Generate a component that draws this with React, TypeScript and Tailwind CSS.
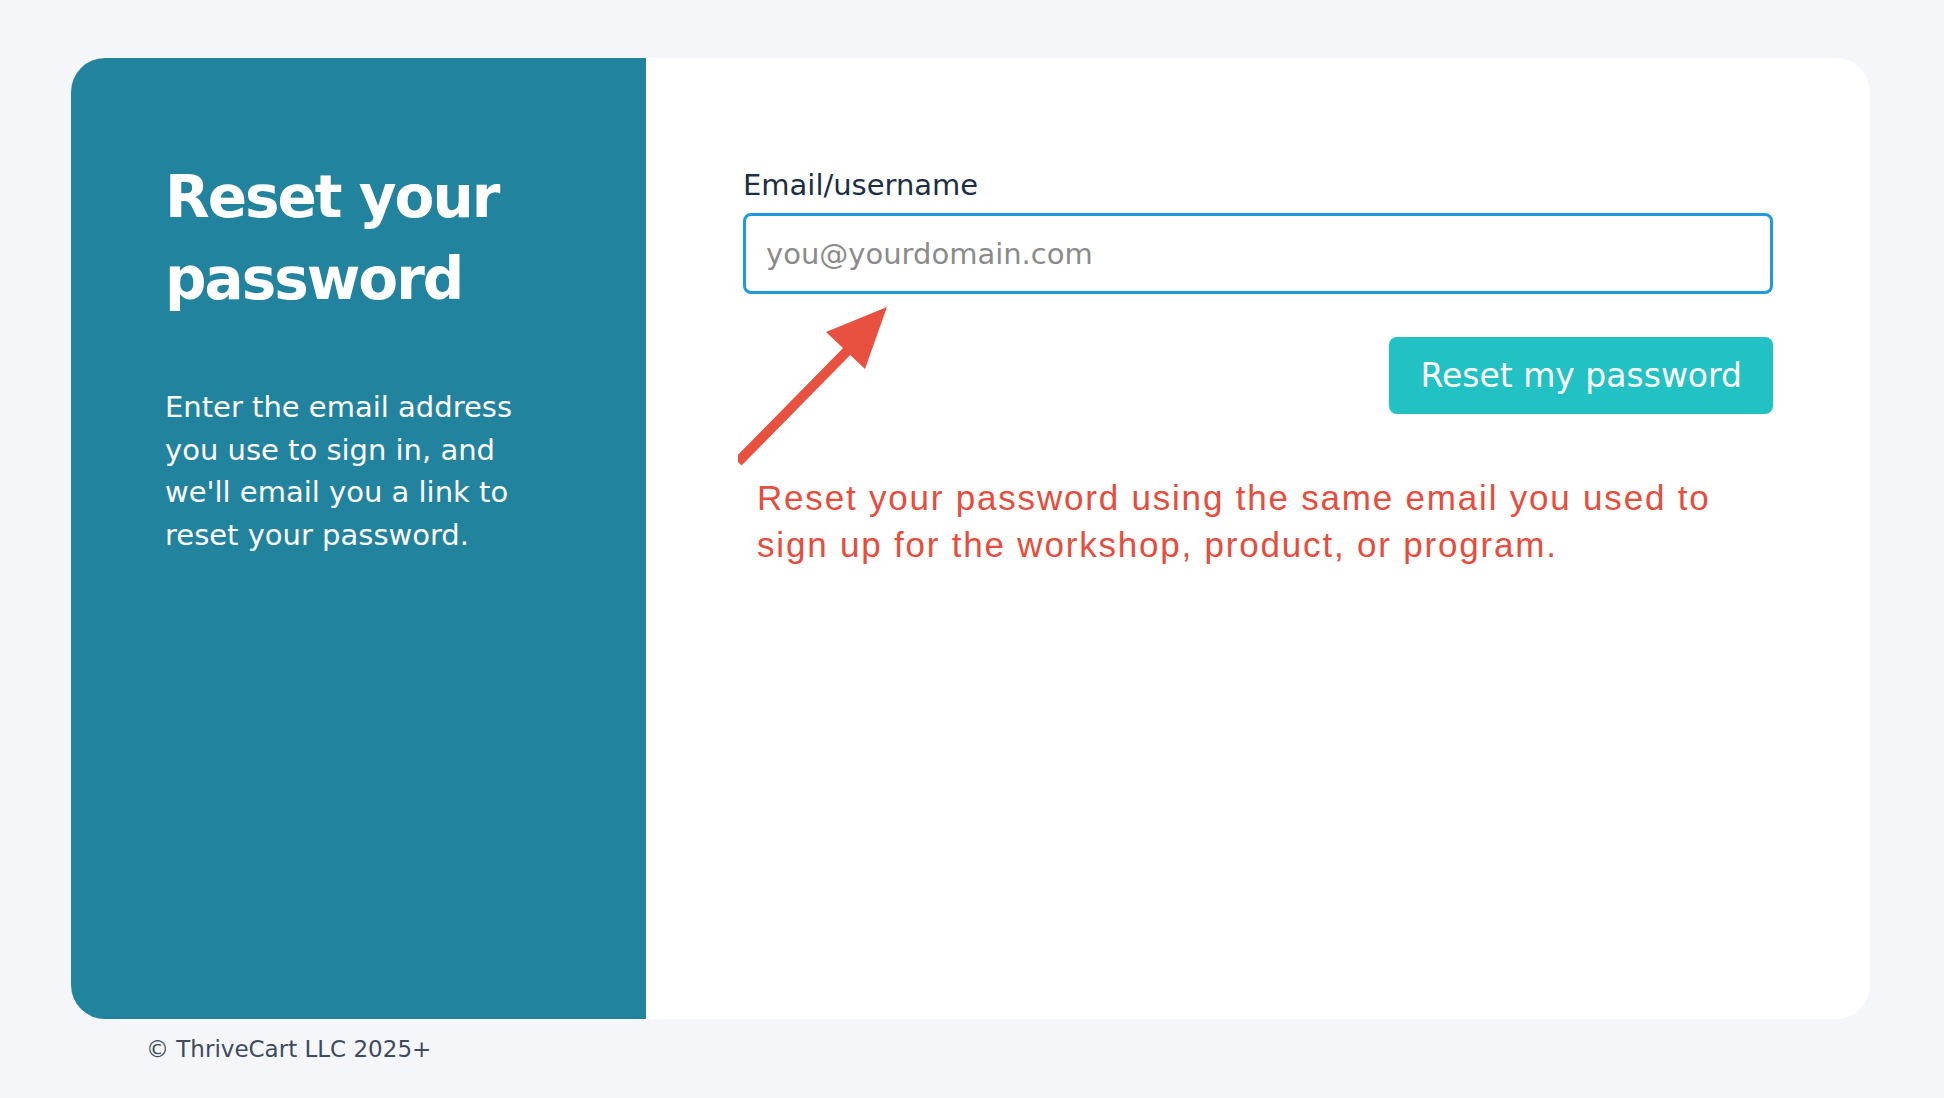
import React from 'react';

const sans = "font-['DejaVu_Sans',sans-serif]";

// red annotation arrow pointing at the email field
const Arrow = () => (
    <svg className="absolute left-0 top-0 pointer-events-none" width="200" height="200" viewBox="0 0 200 200">
        <line x1="0" y1="160" x2="120" y2="38" stroke="#e8503f" strokeWidth="10" />
        <polygon points="149,5 88,30 127,67" fill="#e8503f" />
    </svg>
);

export default function App() {
    return (
        <div className={`min-h-screen bg-[#f4f6fa] pt-[58px] ${sans}`}>
            <div className="ml-[71px] w-[1799px] h-[961px] flex rounded-[34px] overflow-hidden bg-white">
                {/* Left panel */}
                <div className="w-[575px] shrink-0 bg-[#22839f] pl-[94px] pt-[98px] text-white">
                    <h1 className="text-[58px] font-bold leading-[82px] tracking-[-2px]">
                        Reset your<br />password
                    </h1>
                    <p className="mt-[66px] text-[29px] leading-[42.5px]">
                        Enter the email address<br />
                        you use to sign in, and<br />
                        we'll email you a link to<br />
                        reset your password.
                    </p>
                </div>

                {/* Right panel */}
                <div className="relative flex-1 pl-[97px] pr-[97px] pt-[109px]">
                    <label className="block text-[29px] leading-[36px] text-[#1c2e45]">Email/username</label>
                    <input
                        type="text"
                        placeholder="you@yourdomain.com"
                        className="mt-[10px] block w-full h-[81px] rounded-[8px] border-[3px] border-[#2299de] px-[20px] text-[29px] text-[#1c2e45] placeholder:text-[#8b8b8b] outline-none"
                    />
                    <div className="mt-[43px] flex justify-end">
                        <button className="h-[77px] px-[31px] rounded-[8px] bg-[#21c1c4] text-white text-[33px]">
                            Reset my password
                        </button>
                    </div>

                    <div className="relative">
                        <div className="absolute left-[-5px] top-[-112px] w-[200px] h-[200px]">
                            <Arrow />
                        </div>
                    </div>

                    <p className="mt-[60px] ml-[14px] font-['Liberation_Sans',Arial,sans-serif] text-[35px] leading-[47px] tracking-[1.8px] text-[#e74c3c]">
                        Reset your password using the same email you used to<br />
                        sign up for the workshop, product, or program.
                    </p>
                </div>
            </div>

            <footer className="pl-[146px] pt-[15px] text-[23px] leading-[30px] text-[#3d4b5f]">
                © ThriveCart LLC 2025+
            </footer>
        </div>
    );
}
